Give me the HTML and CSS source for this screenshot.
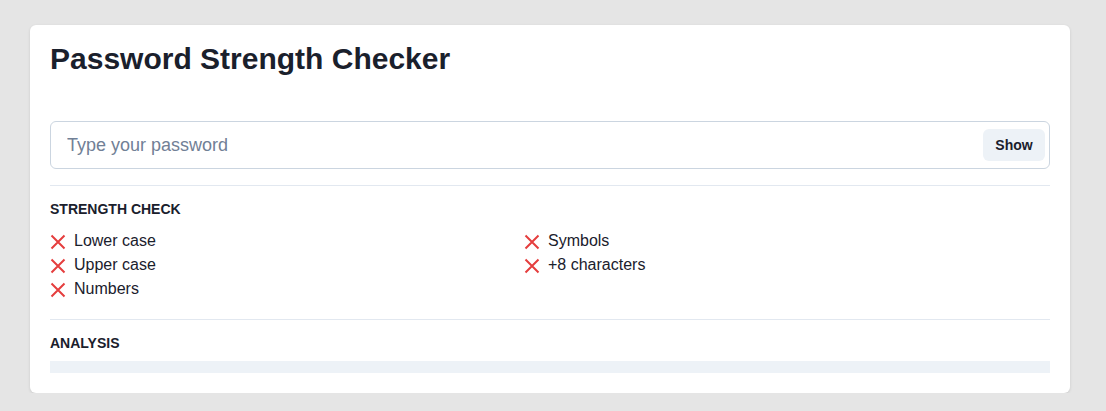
FILE: index.html
```html
<!DOCTYPE html>
<html lang="en">
<head>
<meta charset="utf-8">
<title>Password Strength Checker</title>
<link rel="stylesheet" href="styles.css">
</head>
<body>
<main class="card">
  <h1 class="title">Password Strength Checker</h1>
  <div class="field">
    <input class="field-input" type="password" placeholder="Type your password">
    <button class="show-btn" type="button">Show</button>
  </div>
  <hr class="divider">
  <h2 class="section-title">STRENGTH CHECK</h2>
  <ul class="checks">
    <li class="check"><svg class="x-icon" viewBox="0 0 16 16"><path d="M1.5 1.5L14.5 14.5M14.5 1.5L1.5 14.5"/></svg><span>Lower case</span></li>
    <li class="check"><svg class="x-icon" viewBox="0 0 16 16"><path d="M1.5 1.5L14.5 14.5M14.5 1.5L1.5 14.5"/></svg><span>Symbols</span></li>
    <li class="check"><svg class="x-icon" viewBox="0 0 16 16"><path d="M1.5 1.5L14.5 14.5M14.5 1.5L1.5 14.5"/></svg><span>Upper case</span></li>
    <li class="check"><svg class="x-icon" viewBox="0 0 16 16"><path d="M1.5 1.5L14.5 14.5M14.5 1.5L1.5 14.5"/></svg><span>+8 characters</span></li>
    <li class="check"><svg class="x-icon" viewBox="0 0 16 16"><path d="M1.5 1.5L14.5 14.5M14.5 1.5L1.5 14.5"/></svg><span>Numbers</span></li>
  </ul>
  <hr class="divider divider-analysis">
  <h2 class="section-title">ANALYSIS</h2>
  <div class="meter"></div>
</main>
</body>
</html>
```
FILE: styles.css
```css
* { box-sizing: border-box; }

body {
  margin: 0;
  background: #e5e5e5;
  font-family: "Liberation Sans", Arial, sans-serif;
  color: #1a202c;
}

.card {
  margin: 25px 0 0 30px;
  width: 1040px;
  background: #ffffff;
  border-radius: 6px;
  box-shadow: 0 1px 3px rgba(0, 0, 0, 0.12);
  padding: 16px 20px 20px;
}

.title {
  margin: 0 0 44px;
  font-size: 30px;
  line-height: 36px;
  font-weight: 700;
  color: #1a202c;
}

.field {
  display: flex;
  align-items: center;
  height: 48px;
  border: 1px solid #cbd5e0;
  border-radius: 6px;
  padding: 0 4px 0 16px;
}

.field-input {
  flex: 1;
  border: 0;
  outline: 0;
  background: transparent;
  font-family: inherit;
  font-size: 18px;
  color: #1a202c;
  padding: 0;
}

.field-input::placeholder {
  color: #718096;
}

.show-btn {
  width: 62px;
  height: 32px;
  border: 0;
  border-radius: 6px;
  background: #edf2f7;
  font-family: inherit;
  font-size: 14px;
  font-weight: 700;
  color: #1a202c;
  padding: 0;
}

.divider {
  border: 0;
  border-top: 1px solid #e2e8f0;
  margin: 16px 0 13px;
}

.divider-analysis {
  margin-top: 18px;
}

.section-title {
  margin: 0;
  font-size: 14px;
  line-height: 20px;
  font-weight: 700;
  color: #1a202c;
}

.checks {
  list-style: none;
  margin: 10px 0 0;
  padding: 0;
  display: grid;
  grid-template-columns: 474px 1fr;
}

.check {
  display: flex;
  align-items: center;
  gap: 8px;
  font-size: 16px;
  line-height: 24px;
  color: #1a202c;
}

.x-icon {
  width: 16px;
  height: 16px;
  flex: none;
  fill: none;
  stroke: #e53e3e;
  stroke-width: 2;
  margin-top: 2px;
}

.meter {
  margin-top: 8px;
  height: 12px;
  background: #edf2f7;
}
```
